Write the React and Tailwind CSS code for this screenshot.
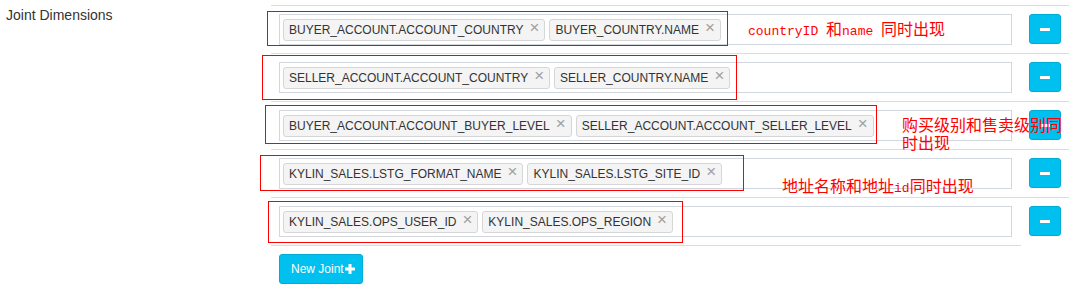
const joints = [
  ['BUYER_ACCOUNT.ACCOUNT_COUNTRY', 'BUYER_COUNTRY.NAME'],
  ['SELLER_ACCOUNT.ACCOUNT_COUNTRY', 'SELLER_COUNTRY.NAME'],
  ['BUYER_ACCOUNT.ACCOUNT_BUYER_LEVEL', 'SELLER_ACCOUNT.ACCOUNT_SELLER_LEVEL'],
  ['KYLIN_SALES.LSTG_FORMAT_NAME', 'KYLIN_SALES.LSTG_SITE_ID'],
  ['KYLIN_SALES.OPS_USER_ID', 'KYLIN_SALES.OPS_REGION'],
];

// red annotation boxes drawn over the screenshot
const marks = [
  'left-[267px] top-[11px] w-[461px] h-[35px]',
  'left-[262px] top-[55px] w-[475px] h-[45px]',
  'left-[265px] top-[105px] w-[612px] h-[39px]',
  'left-[260px] top-[155px] w-[484px] h-[36px]',
  'left-[268px] top-[201px] w-[415px] h-[42px]',
];

function Tag({ name }) {
  return (
    <span className="flex items-center h-[22px] pl-[5px] pr-[5px] bg-[#f4f4f4] border border-[#d6d6d6] rounded-[3px] text-[12px] text-[#333] whitespace-nowrap">
      {name}
      <span className="ml-[6px] -mt-[6px] text-[17px] leading-none text-[#a0a0a0]">×</span>
    </span>
  );
}

function Cjk({ children }) {
  return <span className="font-['Noto_Sans_CJK_SC',sans-serif] text-[16px]">{children}</span>;
}

export default function App() {
  return (
    <div className="relative h-[294px] bg-white flex font-['Liberation_Sans',Arial,sans-serif]">
      <div className="w-[271px] pl-[6px] pt-[5px] text-[14px] leading-5 text-[#333]">Joint Dimensions</div>

      <div className="pt-[5px]">
        {joints.map((tags, i) => (
          <div key={i} className="w-[798px] border-t border-[#dddddd] py-2 pl-2 flex items-start">
            <div className="w-[733px] h-[31px] border border-[#d2d6de] pl-[3px] pt-[4px] flex gap-1">
              {tags.map((t) => <Tag key={t} name={t} />)}
            </div>
            <button className="ml-[17px] w-[32px] h-[30px] bg-[#00c0ef] border border-[#00acd6] rounded-[3px] flex items-center justify-center">
              <span className="w-[10px] h-[3px] bg-white" />
            </button>
          </div>
        ))}
        <div className="w-[750px] border-t border-[#dddddd] pt-2 pl-2">
          <button className="h-[30px] w-[84px] pl-[11px] bg-[#00c0ef] border border-[#00acd6] rounded-[3px] flex items-center text-[12px] text-white">
            New Joint
            <svg width="10" height="10" viewBox="0 0 10 10" className="ml-[1px]">
              <rect x="3.5" y="0" width="3" height="10" fill="white" />
              <rect x="0" y="3.5" width="10" height="3" fill="white" />
            </svg>
          </button>
        </div>
      </div>

      {marks.map((m) => (
        <div key={m} className={`absolute border border-[#ff0000] pointer-events-none ${m}`} />
      ))}

      <div className="absolute left-[748px] top-[20px] leading-4 text-[13px] text-[#ff0000] font-['Liberation_Mono',monospace] whitespace-pre">
        countryID <Cjk>和</Cjk>name <Cjk>同时出现</Cjk>
      </div>
      <div className="absolute left-[902px] top-[116px] leading-[17px] text-[#ff0000]">
        <Cjk>购买级别和售卖级别同<br />时出现</Cjk>
      </div>
      <div className="absolute left-[782px] top-[177px] leading-4 text-[13px] text-[#ff0000] font-['Liberation_Mono',monospace] whitespace-pre">
        <Cjk>地址名称和地址</Cjk>id<Cjk>同时出现</Cjk>
      </div>
    </div>
  );
}
